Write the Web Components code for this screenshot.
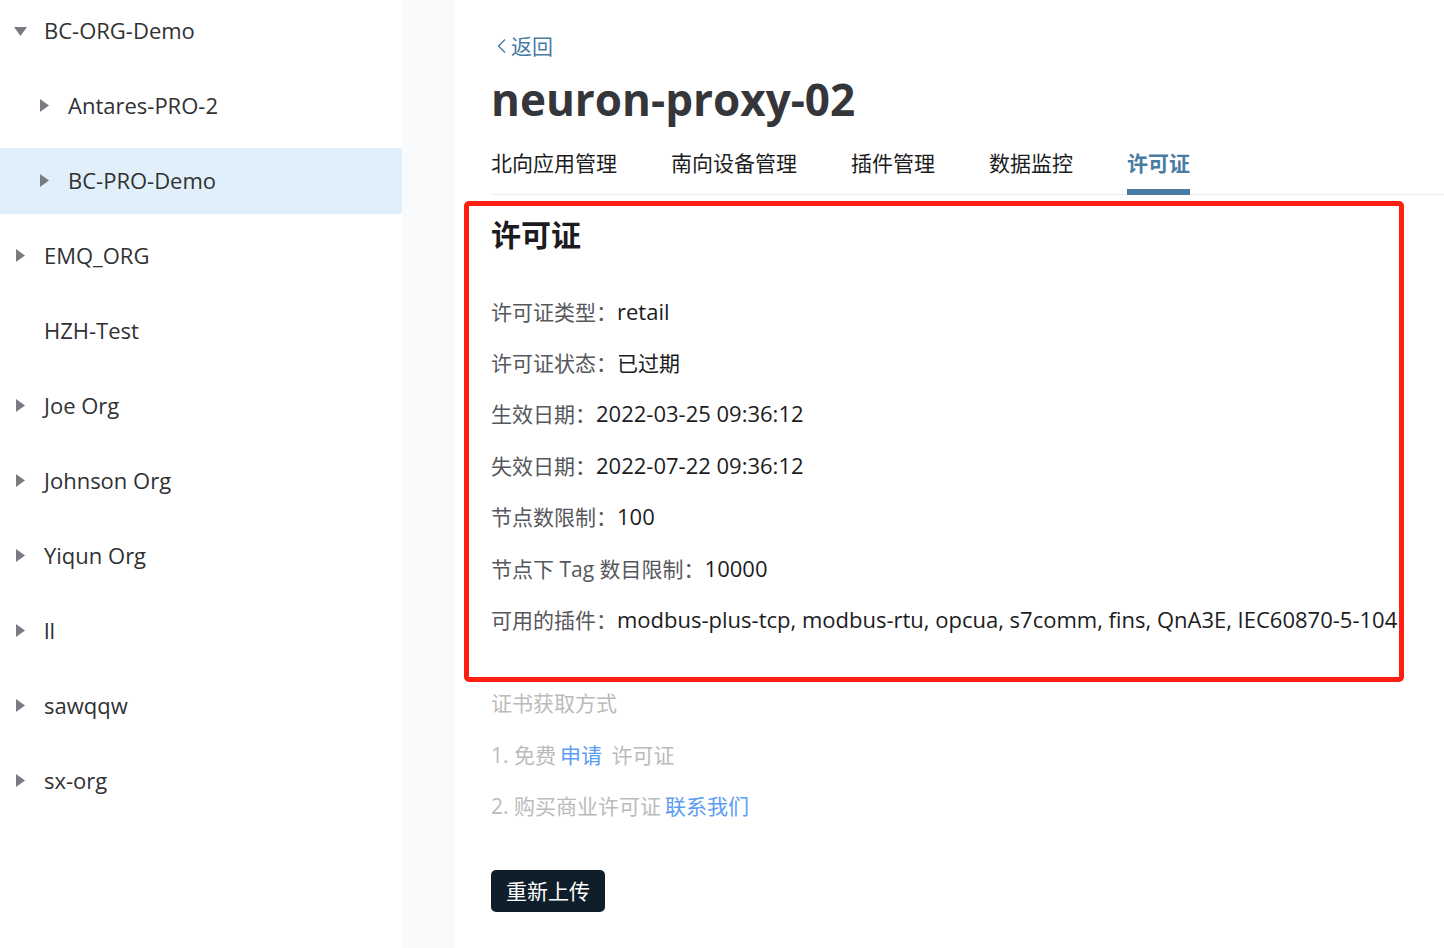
<!DOCTYPE html>
<html lang="zh-CN">
<head>
<meta charset="utf-8">
<title>neuron-proxy-02</title>
<style>
  body { margin: 0; background: #fff; color: #1c1c1e; font: 21px/32px "Open Sans", "Noto Sans CJK SC", sans-serif; }
</style>
</head>
<body>
<app-layout>
  <org-tree slot="side">
    <tree-item state="open">BC-ORG-Demo</tree-item>
    <tree-item state="closed" level="2">Antares-PRO-2</tree-item>
    <tree-item state="closed" level="2" selected>BC-PRO-Demo</tree-item>
    <tree-item state="closed">EMQ_ORG</tree-item>
    <tree-item state="leaf">HZH-Test</tree-item>
    <tree-item state="closed">Joe Org</tree-item>
    <tree-item state="closed">Johnson Org</tree-item>
    <tree-item state="closed">Yiqun Org</tree-item>
    <tree-item state="closed">ll</tree-item>
    <tree-item state="closed">sawqqw</tree-item>
    <tree-item state="closed">sx-org</tree-item>
  </org-tree>
  <page-header>
    neuron-proxy-02
    <page-tab slot="tabs">北向应用管理</page-tab>
    <page-tab slot="tabs">南向设备管理</page-tab>
    <page-tab slot="tabs">插件管理</page-tab>
    <page-tab slot="tabs">数据监控</page-tab>
    <page-tab slot="tabs" active>许可证</page-tab>
  </page-header>
  <license-card>
    <span slot="title">许可证</span>
    <license-field label="许可证类型：">retail</license-field>
    <license-field label="许可证状态：" text="zh">已过期</license-field>
    <license-field label="生效日期：">2022-03-25 09:36:12</license-field>
    <license-field label="失效日期：">2022-07-22 09:36:12</license-field>
    <license-field label="节点数限制：">100</license-field>
    <license-field label="节点下 Tag 数目限制：">10000</license-field>
    <license-field label="可用的插件：">modbus-plus-tcp, modbus-rtu, opcua, s7comm, fins, QnA3E, IEC60870-5-104</license-field>
  </license-card>
  <license-help></license-help>
  <upload-button>重新上传</upload-button>
</app-layout>

<script>
const define = (name, html, setup) => {
  const template = document.createElement('template');
  template.innerHTML = html;
  customElements.define(name, class extends HTMLElement {
    constructor() {
      super();
      this.attachShadow({ mode: 'open' }).append(template.content.cloneNode(true));
    }
    connectedCallback() { if (setup) setup(this, this.shadowRoot); }
  });
};

define('app-layout', `
  <style>
    :host { display: grid; grid-template-columns: 402px minmax(0, 1fr); column-gap: 53px; min-height: 100vh; background: #f9fafc; }
    aside, main { background: #fff; }
    main { box-sizing: border-box; padding: 30px 0 36px; }
  </style>
  <aside><slot name="side"></slot></aside>
  <main><slot></slot></main>`);

define('org-tree', `
  <style>
    :host { display: block; }
    nav { display: flex; flex-direction: column; gap: 9px; margin-top: -2px; }
  </style>
  <nav aria-label="组织"><slot></slot></nav>`);

define('tree-item', `
  <style>
    :host { display: block; color: #303133; font-size: 22px; }
    button { display: flex; align-items: center; gap: 16px; width: 100%; height: 66px; padding: 0 12px; border: 0; border-radius: 0 3px 3px 0; background: none; color: inherit; font: inherit; text-align: left; }
    :host([level="2"]) button { padding-left: 36px; }
    :host([selected]) button { background: #e1effa; }
    svg { width: 16px; height: 16px; fill: #787c82; }
    span { padding-bottom: 2px; }
    :host([state="open"]) svg { transform: rotate(90deg); }
    :host([state="leaf"]) svg { visibility: hidden; }
  </style>
  <button type="button"><svg viewBox="0 0 16 16" aria-hidden="true"><path d="M4 1 13 7.5 4 14Z"/></svg><span><slot></slot></span></button>`,
  (host, root) => {
    if (host.getAttribute('state') !== 'leaf')
      root.querySelector('button').setAttribute('aria-expanded', host.getAttribute('state') === 'open');
  });

define('page-header', `
  <style>
    :host { display: block; padding-left: 36px; }
    a { display: inline-flex; align-items: center; color: #487ca3; text-decoration: none; }
    svg { width: 20px; height: 20px; fill: none; stroke: currentColor; stroke-width: 1.4; }
    h1 { margin: 5px 0 18px; color: #35363a; font-size: 44px; line-height: 60px; font-weight: 700; }
    nav { display: flex; gap: 54px; border-bottom: 1px solid #ebeef5; }
  </style>
  <a href="#back"><svg viewBox="0 0 20 20" aria-hidden="true"><path d="M14 3.5 7.5 10 14 16.5"/></svg>返回</a>
  <h1><slot></slot></h1>
  <nav><slot name="tabs"></slot></nav>`);

define('page-tab', `
  <style>
    :host { display: block; margin-bottom: -1px; }
    a { display: block; padding-bottom: 10px; border-bottom: 6px solid transparent; color: #1c1c1e; text-decoration: none; white-space: nowrap; }
    :host([active]) a { border-color: #487ca3; color: #487ca3; font-weight: 700; }
  </style>
  <a href="#tab"><slot></slot></a>`);

define('license-card', `
  <style>
    :host { display: block; margin: 6px 40px 0 9px; padding: 9px 0 41px 22px; border: 5px solid #ff1e10; border-radius: 5px; }
    h2 { margin: 0 0 40px; font-size: 30px; line-height: 40px; font-weight: 700; }
    div { display: flex; flex-direction: column; justify-content: space-between; min-height: 341px; }
  </style>
  <h2><slot name="title"></slot></h2>
  <div><slot></slot></div>`);

define('license-field', `
  <style>
    :host { display: block; }
    .label { color: #56585d; }
    .value { font-size: 22px; }
    :host([text="zh"]) .value { font-size: 21px; }
  </style>
  <span class="label"></span><span class="value"><slot></slot></span>`,
  (host, root) => { root.querySelector('.label').textContent = host.getAttribute('label'); });

define('license-help', `
  <style>
    :host { display: flex; flex-direction: column; justify-content: space-between; min-height: 135px; margin: 5px 36px 0; color: #bbb; }
    p { margin: 0; }
    a { margin: 0 4px; color: #5c9cf5; text-decoration: none; }
  </style>
  <p>证书获取方式</p>
  <p>1. 免费<a href="#apply">申请</a> 许可证</p>
  <p>2. 购买商业许可证<a href="#contact">联系我们</a></p>`);

define('upload-button', `
  <style>
    :host { display: block; margin: 48px 36px 0; }
    button { height: 42px; padding: 0 15px; border: 0; border-radius: 5px; background: #0e1f2b; color: #fff; font: inherit; }
  </style>
  <button type="button"><slot></slot></button>`);
</script>
</body>
</html>
